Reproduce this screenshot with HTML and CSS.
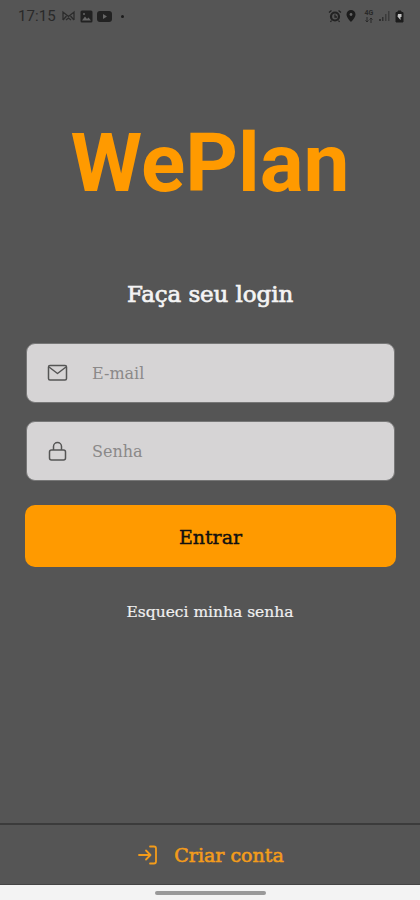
FILE: index.html
```html
<!DOCTYPE html>
<html lang="pt-BR">

<head>
    <meta charset="UTF-8">
    <meta name="viewport" content="width=device-width, initial-scale=1.0">
    <title>WePlan - Login</title>
    <link rel="stylesheet" href="styles.css">
</head>

<body>
    <div class="status-bar">
        <span class="status-time">17:15</span>
        <svg class="icon-mail" width="13" height="12" viewBox="0 0 13 12" fill="none" stroke="#2c2c2c" stroke-width="1.300">
            <path d="M1 10V2l5.500 4.500L12 2v8M1 10l3.500-4M12 10L8.500 6M4 10l2.500-2L9 10" />
        </svg>
        <svg class="icon-picture" width="13" height="13" viewBox="0 0 13 13">
            <rect x=".5" y=".5" width="12" height="12" rx="1.500" fill="#222" />
            <path d="M2 10.500l3-4 2 2.500 1.500-1.500 2.500 3z" fill="#666" />
            <circle cx="4" cy="4" r="1" fill="#666" />
        </svg>
        <svg class="icon-video" width="15" height="11" viewBox="0 0 15 11">
            <rect width="15" height="11" rx="3" fill="#222" />
            <path d="M6 3l4 2.500L6 8z" fill="#666" />
        </svg>
        <span class="status-dot"></span>

        <div class="status-right">
            <svg width="14" height="14" viewBox="0 0 14 14" fill="none" stroke="#222">
                <circle cx="7" cy="7.500" r="4" stroke-width="2.200" />
                <path d="M1 3.500L3.500 1.500M13 3.500l-2.500-2M3.500 11.500L2.500 13M10.500 11.500l1 1.500M7 5.500v2.500h2" stroke-width="1.300" />
            </svg>
            <svg class="icon-pin" width="10" height="14" viewBox="0 0 10 14">
                <path d="M5 1a4.500 4.500 0 0 0-4.500 4.500C.5 8.500 5 13 5 13s4.500-4.500 4.500-7.500A4.500 4.500 0 0 0 5 1z" fill="#1c1c1c" />
                <circle cx="5" cy="5.500" r="1.400" fill="#666" />
            </svg>
            <div class="status-network">
                <span>4G</span>
                <svg width="8" height="6" viewBox="0 0 8 6" fill="none" stroke="#292929">
                    <path d="M2 0v5M.5 3.500L2 5l1.500-1.500M6 6V1M4.500 2.500L6 1l1.500 1.500" />
                </svg>
            </div>
            <svg class="icon-signal" width="12" height="12" viewBox="0 0 12 12" fill="#303030">
                <rect x="1" y="9" width="2" height="2" />
                <rect x="4" y="7" width="1.500" height="4" />
                <rect x="7" y="4" width="1.500" height="7" opacity=".7" />
                <rect x="10" y="1" width="1.500" height="10" opacity=".7" />
            </svg>
            <svg class="icon-battery" width="9" height="13" viewBox="0 0 9 13">
                <path d="M3 1h3v1.500h2V12H1V2.500h2z" fill="#1c1c1c" stroke="#1c1c1c" />
                <path d="M3 4h3.500v3H5.500v3L2.500 6.500z" fill="#c4c4c4" />
            </svg>
        </div>
    </div>

    <main class="login-container">
        <h1>WePlan</h1>
        <h2>Faça seu login</h2>

        <form class="login-form">
            <label class="input-group">
                <svg width="21" height="21" viewBox="0 0 21 21" fill="none" stroke="#555" stroke-width="1.500" stroke-linejoin="round">
                    <rect x="1.500" y="2.500" width="18" height="14.500" rx="1.500" />
                    <path d="M2 4l8.500 6.500L19 4" />
                </svg>
                <input type="email" name="email" placeholder="E-mail">
            </label>
            <label class="input-group">
                <svg width="21" height="21" viewBox="0 0 21 21" fill="none" stroke="#555" stroke-width="1.500">
                    <rect x="2.500" y="9" width="16" height="10" rx="2" />
                    <path d="M6.500 9V5.500a4 4 0 0 1 8 0V9" />
                </svg>
                <input type="password" name="password" placeholder="Senha">
            </label>
            <button type="button" class="login-button">Entrar</button>
        </form>

        <a href="#" class="forgot-password">Esqueci minha senha</a>
    </main>

    <a href="#" class="create-account">
        <svg width="20" height="20" viewBox="0 0 20 20" fill="none" stroke="#f39c1b" stroke-width="1.800" stroke-linecap="round" stroke-linejoin="round">
            <path d="M12 1.500h4a2 2 0 0 1 2 2v13a2 2 0 0 1-2 2h-4" />
            <path d="M1 10h11M8 5.500l4.500 4.500L8 14.500" />
        </svg>
        <span>Criar conta</span>
    </a>

    <div class="navigation-bar">
        <div class="navigation-handle"></div>
    </div>
</body>

</html>
```
FILE: styles.css
```css
* {
    box-sizing: border-box;
}

body {
    margin: 0;
    height: 900px;
    display: flex;
    flex-direction: column;
    background-color: #555;
    font-family: 'Roboto Slab', 'DejaVu Serif', serif;
    overflow: hidden;
}

.status-bar {
    height: 32px;
    padding: 0 16px 0 18px;
    display: flex;
    align-items: center;
    color: #292929;
    font-family: Roboto, sans-serif;
}

.status-time {
    width: 44px;
    font-size: 15px;
    letter-spacing: 0.1px;
}

.icon-picture {
    margin-left: 5px;
}

.icon-video {
    margin-left: 4px;
}

.status-dot {
    width: 3px;
    height: 3px;
    margin-left: 9px;
    border-radius: 50%;
    background-color: #1c1c1c;
}

.status-right {
    display: flex;
    align-items: center;
    margin-left: auto;
}

.icon-pin {
    margin-left: 4px;
}

.status-network {
    width: 10px;
    margin-left: 8px;
    display: flex;
    flex-direction: column;
    align-items: center;
    font-size: 7px;
    line-height: 7px;
    font-weight: bold;
}

.icon-signal {
    margin-left: 4px;
}

.icon-battery {
    margin-left: 5px;
}

.login-container {
    flex: 1;
    display: flex;
    flex-direction: column;
    align-items: center;
}

.login-container h1 {
    margin: 83px 0 0;
    color: #ff9a00;
    font-family: Roboto, sans-serif;
    font-size: 82px;
    line-height: 96px;
    font-weight: bold;
}

.login-container h2 {
    margin: 67px 0 0;
    color: #f4f4f4;
    font-size: 23px;
    line-height: 32px;
    font-weight: normal;
    letter-spacing: -0.1px;
    -webkit-text-stroke: 0.7px #f4f4f4;
}

.login-form {
    width: 371px;
    margin: 33px 0 0 1px;
    display: flex;
    flex-direction: column;
    align-items: center;
}

.input-group {
    width: 369px;
    height: 60px;
    margin-bottom: 18px;
    padding-left: 20px;
    display: flex;
    align-items: center;
    background-color: #d6d4d5;
    border: 1px solid #777;
    border-radius: 9px;
}

.input-group input {
    flex: 1;
    min-width: 0;
    margin-left: 24px;
    padding: 0;
    border: none;
    outline: none;
    background: none;
    color: #333;
    font-family: inherit;
    font-size: 16px;
}

.input-group input::placeholder {
    color: #8b8989;
    opacity: 1;
}

.login-button {
    width: 371px;
    height: 62px;
    margin-top: 6px;
    padding: 1px 0 0;
    border: none;
    border-radius: 10px;
    background-color: #ff9a00;
    color: #111;
    font-family: inherit;
    font-size: 19px;
    -webkit-text-stroke: 0.4px #111;
    cursor: pointer;
}

.forgot-password {
    margin-top: 33px;
    color: #f0f0f0;
    font-size: 15.5px;
    line-height: 24px;
    text-decoration: none;
    -webkit-text-stroke: 0.2px #f0f0f0;
}

.create-account {
    height: 62px;
    padding: 1px 0 0 2px;
    display: flex;
    align-items: center;
    justify-content: center;
    gap: 16px;
    border-top: 2px solid #3b3b3b;
    border-bottom: 1px solid #444;
    color: #f39c1b;
    font-size: 19px;
    text-decoration: none;
    -webkit-text-stroke: 0.6px #f39c1b;
}

.navigation-bar {
    height: 15px;
    display: flex;
    justify-content: center;
    padding-top: 6px;
    background-color: #f3f3f3;
}

.navigation-handle {
    width: 111px;
    height: 4px;
    border-radius: 2px;
    background-color: #999;
}
```
